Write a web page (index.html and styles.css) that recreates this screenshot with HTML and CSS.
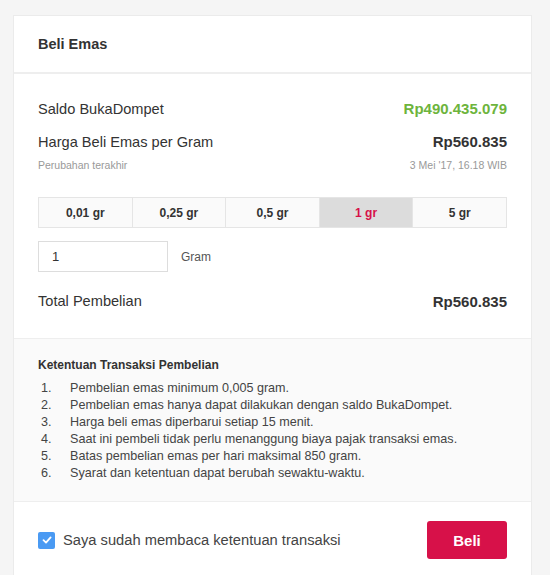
FILE: index.html
```html
<!DOCTYPE html>
<html lang="id">
<head>
  <meta charset="UTF-8">
  <meta name="viewport" content="width=device-width, initial-scale=1.0">
  <title>Beli Emas</title>
  <link rel="stylesheet" href="styles.css">
</head>
<body>
  <div class="card">
    <div class="card-header">Beli Emas</div>

    <div class="card-body">
      <div class="row">
        <span>Saldo BukaDompet</span>
        <span class="amount green">Rp490.435.079</span>
      </div>
      <div class="row">
        <span>Harga Beli Emas per Gram</span>
        <span class="amount">Rp560.835</span>
      </div>
      <div class="row small">
        <span>Perubahan terakhir</span>
        <span>3 Mei '17, 16.18 WIB</span>
      </div>

      <div class="presets">
        <button>0,01 gr</button>
        <button>0,25 gr</button>
        <button>0,5 gr</button>
        <button class="active">1 gr</button>
        <button>5 gr</button>
      </div>

      <div class="qty">
        <input type="text" value="1">
        <span>Gram</span>
      </div>

      <div class="row total">
        <span>Total Pembelian</span>
        <span class="amount">Rp560.835</span>
      </div>
    </div>

    <div class="terms">
      <h3>Ketentuan Transaksi Pembelian</h3>
      <ol>
        <li>Pembelian emas minimum 0,005 gram.</li>
        <li>Pembelian emas hanya dapat dilakukan dengan saldo BukaDompet.</li>
        <li>Harga beli emas diperbarui setiap 15 menit.</li>
        <li>Saat ini pembeli tidak perlu menanggung biaya pajak transaksi emas.</li>
        <li>Batas pembelian emas per hari maksimal 850 gram.</li>
        <li>Syarat dan ketentuan dapat berubah sewaktu-waktu.</li>
      </ol>
    </div>

    <div class="card-footer">
      <label class="agree">
        <span class="check">
          <svg width="12" height="12" viewBox="0 0 12 12"><path d="M2.5 6.2 L5 8.6 L9.6 3.4" fill="none" stroke="#fff" stroke-width="1.8" stroke-linecap="round" stroke-linejoin="round"/></svg>
        </span>
        Saya sudah membaca ketentuan transaksi
      </label>
      <button class="buy">Beli</button>
    </div>
  </div>
</body>
</html>
```

FILE: styles.css
```css
body {
  margin: 0;
  padding: 15px 18px 0 13px;
  background: #f5f5f5;
  font-family: "Liberation Sans", Arial, sans-serif;
  color: #333;
}
.card {
  background: white;
  border: 1px solid #ebebeb;
  border-bottom: none;
}
.card-header {
  height: 56px;
  padding: 0 24px;
  display: flex;
  align-items: center;
  font-size: 14.5px;
  font-weight: bold;
  color: #333;
  border-bottom: 2px solid #eee;
}
.card-body {
  padding: 18px 24px 20px;
}
.row {
  display: flex;
  justify-content: space-between;
  align-items: center;
  font-size: 14.6px;
  height: 33px;
}
.amount {
  font-size: 15px;
  font-weight: bold;
}
.green {
  color: #6db43c;
}
.row.small {
  height: 14px;
  font-size: 10.5px;
  color: #999;
}
.presets {
  display: flex;
  margin-top: 25px;
  border: 1px solid #e5e5e5;
}
.presets button {
  flex: 1;
  height: 29px;
  border: none;
  border-left: 1px solid #e5e5e5;
  background: #fafafa;
  font-family: inherit;
  font-size: 12px;
  font-weight: bold;
  color: #333;
  padding: 0;
}
.presets button:first-child {
  border-left: none;
}
.presets button.active {
  background: #dcdcdc;
  color: #d71149;
}
.qty {
  display: flex;
  align-items: center;
  gap: 13px;
  margin: 13px 0 12px;
}
.qty input {
  width: 130px;
  height: 31px;
  box-sizing: border-box;
  border: 1px solid #ddd;
  padding: 0 13px;
  font-family: inherit;
  font-size: 13px;
  color: #333;
}
.qty span {
  font-size: 12px;
  color: #555;
}
.row.total {
  height: 34px;
}
.terms {
  background: #fafafa;
  border-top: 1px solid #eee;
  padding: 19px 24px 19px;
}
.terms h3 {
  margin: 0 0 8px;
  font-size: 12px;
  font-weight: bold;
  color: #333;
}
.terms ol {
  margin: 0;
  padding-left: 17px;
  font-size: 12.6px;
  line-height: 17px;
  color: #444;
}
.terms li {
  padding-left: 15px;
}
.card-footer {
  border-top: 1px solid #eee;
  display: flex;
  justify-content: space-between;
  align-items: center;
  padding: 19px 24px 30px;
}
.agree {
  display: flex;
  align-items: center;
  gap: 8px;
  font-size: 14.7px;
  color: #444;
}
.check {
  width: 17px;
  height: 17px;
  border-radius: 2px;
  background: #4a9af3;
  display: flex;
  align-items: center;
  justify-content: center;
}
.buy {
  width: 80px;
  height: 38px;
  border: none;
  border-radius: 3px;
  background: #d71149;
  color: white;
  font-family: inherit;
  font-size: 15px;
  font-weight: bold;
}
```
